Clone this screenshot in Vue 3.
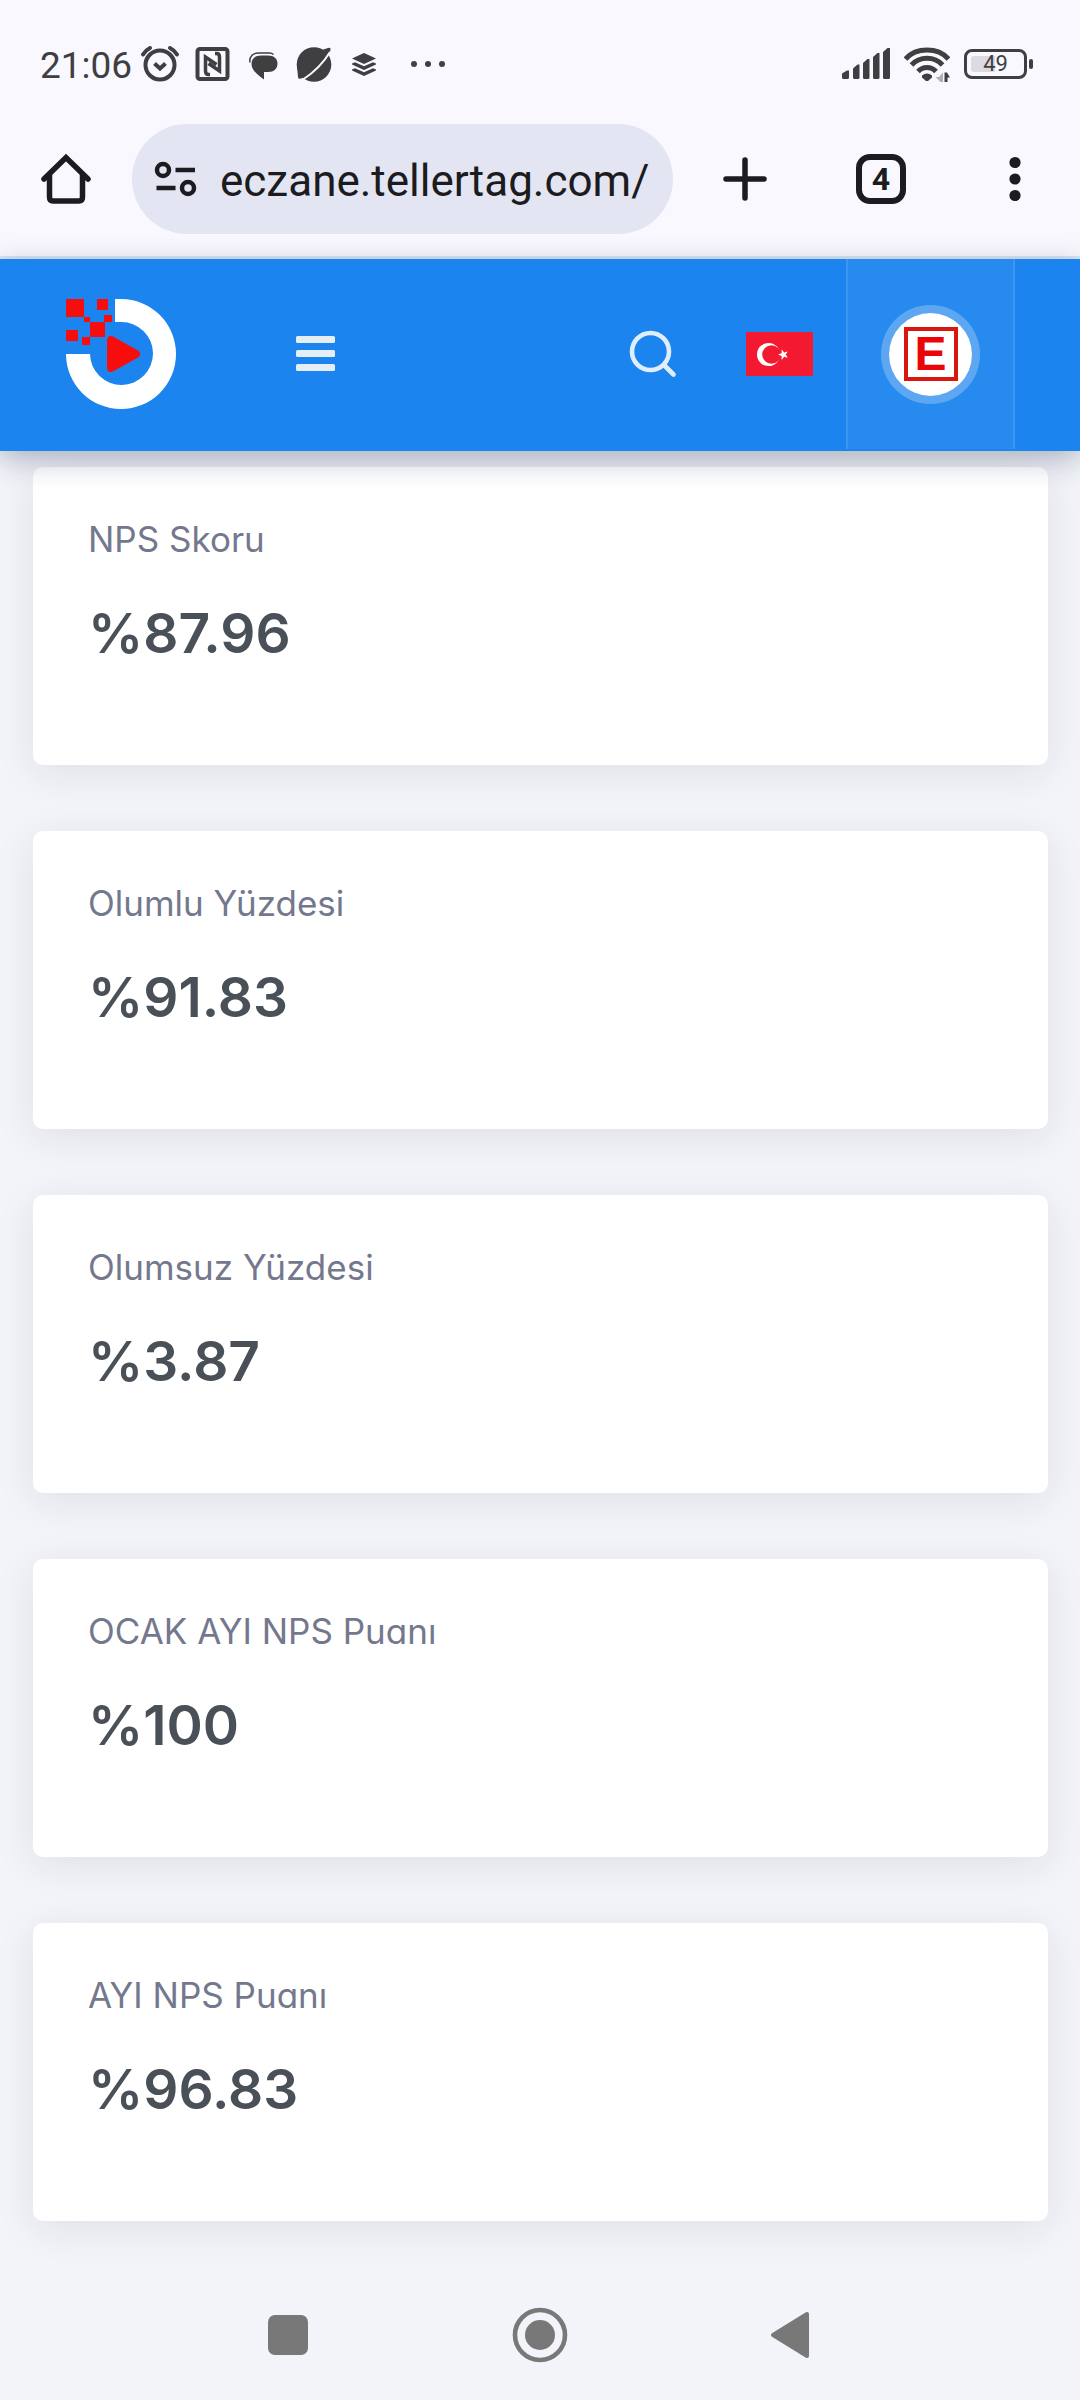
<script setup>
import { ref } from 'vue'

const url = ref('eczane.tellertag.com/')

const cards = [
  { label: 'NPS Skoru', value: '%87.96' },
  { label: 'Olumlu Yüzdesi', value: '%91.83' },
  { label: 'Olumsuz Yüzdesi', value: '%3.87' },
  { label: 'OCAK AYI NPS Puanı', value: '%100' },
  { label: 'AYI NPS Puanı', value: '%96.83' },
]
</script>

<template>
  <div class="screen">
    <div class="status">
      <span class="time">21:06</span>
      <div class="status-icons">
        <svg viewBox="0 0 40 40" fill="none" stroke="#3f3f41" stroke-linecap="round">
          <circle cx="20" cy="21" r="14.5" stroke-width="4" />
          <path d="M14.5 19.5l5.500 5 5.500-5" stroke-width="4" stroke-linecap="butt" />
          <path d="M3 10.500C4.500 8 7 5.500 10 4M37 10.500C35.500 8 33 5.500 30 4" stroke-width="4" />
        </svg>
        <svg viewBox="0 0 40 40" fill="none" stroke="#3f3f41">
          <rect x="6.500" y="5" width="30" height="30" rx="2.500" stroke-width="4" />
          <path d="M19 30.500h-1.500q-3 0-3-3.500V13l11 7.500M24 9.500h1.500q3 0 3 3.500v14l-11-7.500" stroke-width="3.500" />
        </svg>
        <svg viewBox="0 0 40 40">
          <path fill="#3f3f41" d="M9.500 20c0-5.500 4-8.500 9.500-8.500h7c6 0 9.500 3 9.500 8s-3.500 8.500-9.500 8.500h-4v7.500c-6-4.500-12.500-9-12.500-15.500z" />
          <path d="M8 18.500c-1-6 3-9.500 8.500-9.500h11q2.500 0 4 1.500" fill="none" stroke="#3f3f41" stroke-width="1.500" />
        </svg>
        <svg viewBox="0 0 40 40">
          <circle cx="21" cy="20.500" r="17.300" fill="#3f3f41" />
          <path fill="#3f3f41" d="M29 6l6-2q3-1 2.500 2l-2.500 6zM4 22l1 11q0 2.500 3 1.500l6-2z" />
          <path d="M37 8C31 18 20 29 10 35.500" stroke="#f9f8fe" stroke-width="2" fill="none" />
        </svg>
        <svg viewBox="0 0 40 40" fill="#3f3f41">
          <path d="M20 9l12 5.500-12 5.500-12-5.500z" />
          <path d="M8 19.500l3-1.300 9 4.100 9-4.100 3 1.300v1l-12 5.500-12-5.500zM8 25.500l3-1.300 9 4.100 9-4.100 3 1.300v1l-12 5.500-12-5.500z" />
        </svg>
      </div>
      <svg class="more" viewBox="0 0 36 8" fill="#3f3f41">
        <circle cx="4" cy="4" r="3" /><circle cx="18" cy="4" r="3" /><circle cx="32" cy="4" r="3" />
      </svg>
      <div class="status-right">
        <svg class="signal" viewBox="0 0 48 32" fill="#3f3f41">
          <path d="M0 25.500l5-3h2v7q0 1.500-1.500 1.500h-4q-1.500 0-1.500-1.500zM11 20.500l4.500-4h2v13q0 1.500-1.500 1.500h-3.500q-1.500 0-1.500-1.500zM21 15l4.500-4h2v18.500q0 1.500-1.500 1.500h-3.500q-1.500 0-1.500-1.500zM31 9l4.500-4h2v24.500q0 1.500-1.500 1.500h-3.500q-1.500 0-1.500-1.500zM41 4l4.500-4h2.500v29.500q0 1.500-1.500 1.500h-4q-1.500 0-1.500-1.500z" />
        </svg>
        <svg class="wifi" viewBox="0 0 46 36" fill="none" stroke="#3f3f41" stroke-width="5">
          <path d="M1.500 13C12 1 34 1 44.500 13M7.500 19c8-9 23-9 31 0M14 25.500c5-5.500 13-5.500 18 0" />
          <path d="M18 29.500q5-4 10 0v2l-4 3.500h-2l-4-3.500z" fill="#3f3f41" stroke="none" />
          <path d="M39 26.500V36h-2.500l-5-5h3.500z" fill="#b0b0b4" stroke="none" />
          <path d="M40.500 36v-9.500h2.500l3 5h-2.500V36z" fill="#3f3f41" stroke="none" />
        </svg>
        <span class="battery"><span class="level">49</span></span>
      </div>
    </div>

    <div class="toolbar">
      <button class="tool home" aria-label="Home">
        <svg width="54" height="54" viewBox="0 0 54 54" fill="none" stroke="#1b1b20" stroke-width="5.500" stroke-linecap="round">
          <path d="M5 27L27 5.500 49 27" />
          <path d="M10.500 23v22q0 4 3.500 4h26q3.500 0 3.500-4V23" />
        </svg>
      </button>
      <form class="address" @submit.prevent>
        <svg width="44" height="36" viewBox="0 0 44 36" fill="none" stroke="#1b1b20" stroke-width="4.500">
          <circle cx="9" cy="9" r="6" /><circle cx="34" cy="27" r="6" />
          <path d="M21.500 9H41M2.500 27h19" />
        </svg>
        <input v-model="url" type="text" aria-label="Address" />
      </form>
      <button class="tool" aria-label="New tab">
        <svg width="46" height="46" viewBox="0 0 46 46" stroke="#1b1b20" stroke-width="5.500" stroke-linecap="round"><path d="M23 4v38M4 23h38" /></svg>
      </button>
      <button class="tool" aria-label="Tabs"><span class="tabs">4</span></button>
      <button class="tool kebab" aria-label="Menu">
        <svg width="12" height="46" viewBox="0 0 12 46" fill="#1b1b20"><circle cx="6" cy="6.500" r="5.600" /><circle cx="6" cy="23" r="5.600" /><circle cx="6" cy="39.500" r="5.600" /></svg>
      </button>
    </div>

    <header class="header">
      <a class="logo" href="#" aria-label="Tellertag">
        <svg width="110" height="110" viewBox="0 0 110 110">
          <path fill="#fff" d="M49 0h6a55 55 0 1 1-55 55h24a31.500 31.500 0 1 0 31.500-32H49z" />
          <path fill="#f70d0d" d="M0 0h18v18H0zM31 0h11v11H31zM18 18h6v5h-6zM38 16h8v7h-8zM24 23h15v15H24zM0 31h12v11H0zM16 38h8v8h-8z" />
          <path fill="#f70d0d" stroke="#f70d0d" stroke-width="8" stroke-linejoin="round" d="M45 41v28l25-14z" />
        </svg>
      </a>
      <button class="menu" aria-label="Menü">
        <svg width="40" height="36" viewBox="0 0 40 36" fill="#e6eef5"><rect width="39" height="7" rx="1.500" /><rect y="14" width="39" height="7" rx="1.500" /><rect y="28" width="39" height="7" rx="1.500" /></svg>
      </button>
      <div class="actions">
        <button aria-label="Ara">
          <svg width="48" height="48" viewBox="0 0 48 48" fill="none" stroke="#e0edfb" stroke-width="4.600" stroke-linecap="round"><circle cx="21.500" cy="21.500" r="18.500" /><path d="M35.500 35.500l9 9" /></svg>
        </button>
        <button aria-label="Türkçe">
          <svg width="67" height="44" viewBox="0 0 67 44">
            <path fill="#f31930" d="M0 0h67v44H0z" />
            <circle cx="22.500" cy="22.500" r="11.500" fill="#fff" /><circle cx="25.500" cy="22.500" r="9.300" fill="#f31930" />
            <path fill="#fff" d="M32 22.500l3.600-1.300.1-3.900 2.400 3.100 3.700-1-2.100 3.200 2.100 3.200-3.700-1-2.400 3.100-.1-3.900z" />
          </svg>
        </button>
      </div>
      <button class="user" aria-label="Hesap">
        <span class="avatar"><span class="letter">E</span></span>
      </button>
    </header>

    <main class="content">
      <section v-for="card in cards" :key="card.label" class="card">
        <p class="label">{{ card.label }}</p>
        <h2 class="value">{{ card.value }}</h2>
      </section>
    </main>

    <nav class="system">
      <button aria-label="Recent apps"><svg width="56" height="56" viewBox="0 0 56 56"><rect x="8" y="8" width="40" height="40" rx="7" fill="#787878" /></svg></button>
      <button aria-label="Home screen"><svg width="56" height="56" viewBox="0 0 56 56"><circle cx="28" cy="28" r="25" fill="none" stroke="#787878" stroke-width="4.600" /><circle cx="28" cy="28" r="15" fill="#787878" /></svg></button>
      <button aria-label="Back"><svg width="56" height="56" viewBox="0 0 56 56"><path d="M43 7v42L9 28z" fill="#787878" stroke="#787878" stroke-width="4" stroke-linejoin="round" /></svg></button>
    </nav>
  </div>
</template>

<style>
body {
  margin: 0;
  background: #f3f4f9;
}
</style>

<style scoped>
.screen {
  display: flex;
  flex-direction: column;
  min-height: 100vh;
  background: #f3f4f9;
  font-family: Inter, "Liberation Sans", sans-serif;
}
button {
  display: flex;
  align-items: center;
  justify-content: center;
  padding: 0;
  border: 0;
  background: none;
  font-family: inherit;
}
svg {
  display: block;
  flex: none;
}
.status {
  display: flex;
  align-items: center;
  height: 102px;
  padding: 26px 53px 0 40px;
  box-sizing: border-box;
  background: #f9f8fe;
  color: #3f3f41;
  font-family: Roboto, sans-serif;
}
.time {
  width: 100px;
  font-size: 37px;
  line-height: 44px;
  padding-top: 4px;
}
.status-icons {
  display: flex;
  gap: 11px;
  height: 40px;
}
.status-icons svg {
  width: 40px;
  height: 40px;
}
.more {
  width: 36px;
  height: 8px;
  margin-left: 26px;
}
.status-right {
  display: flex;
  align-items: center;
  gap: 14px;
  margin-left: auto;
}
.signal {
  width: 48px;
  height: 32px;
}
.wifi {
  width: 46px;
  height: 36px;
}
.battery {
  position: relative;
  width: 63px;
  height: 30px;
  padding: 4px;
  box-sizing: border-box;
  border: 3px solid #3f3f41;
  border-radius: 8px;
}
.battery::after {
  content: "";
  position: absolute;
  right: -9px;
  top: 7px;
  width: 4px;
  height: 10px;
  border-radius: 2px;
  background: #3f3f41;
}
.level {
  display: flex;
  align-items: center;
  justify-content: center;
  height: 100%;
  border-radius: 3px;
  background: linear-gradient(90deg, #dcdbe1 49%, transparent 49%);
  font-size: 22px;
  line-height: 16px;
}
.toolbar {
  display: flex;
  align-items: center;
  height: 157px;
  box-sizing: border-box;
  border-bottom: 3px solid #d9e5f3;
  background: #f9f8fe;
}
.tool {
  flex: none;
  width: 136px;
  height: 110px;
}
.tool.home {
  width: 132px;
}
.tool.kebab {
  width: 131px;
}
.address {
  display: flex;
  align-items: center;
  flex: 1;
  min-width: 0;
  height: 110px;
  margin-right: 4px;
  padding: 0 16px 0 22px;
  box-sizing: border-box;
  border-radius: 55px;
  background: #e3e5f2;
}
.address input {
  flex: 1;
  min-width: 0;
  margin: 0 0 0 22px;
  padding: 4px 0 0;
  border: 0;
  outline: 0;
  background: none;
  color: #1b1b20;
  font-family: Roboto, sans-serif;
  font-size: 44px;
  line-height: 54px;
}
.tabs {
  width: 50px;
  height: 50px;
  box-sizing: border-box;
  border: 6px solid #1b1b20;
  border-radius: 14px;
  color: #1b1b20;
  font: 700 32px/38px Roboto, sans-serif;
}
.header {
  position: relative;
  display: flex;
  align-items: center;
  height: 192px;
  padding: 0 65px 2px 66px;
  box-sizing: border-box;
  background: #1c84ee;
  box-shadow: 0 8px 28px rgba(20, 35, 70, 0.32);
}
.menu {
  width: 80px;
  height: 100px;
  margin-left: 100px;
}
.actions {
  display: flex;
  align-items: center;
  gap: 69px;
  margin: 0 33px 0 auto;
}
.user {
  width: 169px;
  align-self: stretch;
  box-sizing: border-box;
  border: solid rgba(255, 255, 255, 0.1);
  border-width: 0 2px;
  background: rgba(255, 255, 255, 0.05);
}
.avatar {
  display: flex;
  align-items: center;
  justify-content: center;
  width: 99px;
  height: 99px;
  box-sizing: border-box;
  border: 8px solid rgba(255, 255, 255, 0.25);
  border-radius: 50%;
  background: #fff;
  background-clip: padding-box;
}
.letter {
  width: 54px;
  height: 54px;
  box-sizing: border-box;
  border: 4px solid #d8180f;
  color: #ea0606;
  font: 700 48px/46px "Liberation Sans", Arial, sans-serif;
}
.content {
  display: flex;
  flex: 1;
  flex-direction: column;
  gap: 66px;
  padding: 16px 32px 0 33px;
}
.card {
  height: 298px;
  padding: 50px 55px;
  box-sizing: border-box;
  border-radius: 10px;
  background: #fff;
  box-shadow: 0 8px 40px rgba(30, 32, 37, 0.09);
}
.label {
  margin: 0;
  color: #74788d;
  font-size: 35px;
  line-height: 44px;
  font-feature-settings: "cv11";
}
.value {
  margin: 38px 0 0;
  color: #495057;
  font-size: 55px;
  font-weight: 600;
  line-height: 68px;
}
.system {
  display: flex;
  align-items: center;
  justify-content: center;
  gap: 196px;
  height: 130px;
}
</style>
